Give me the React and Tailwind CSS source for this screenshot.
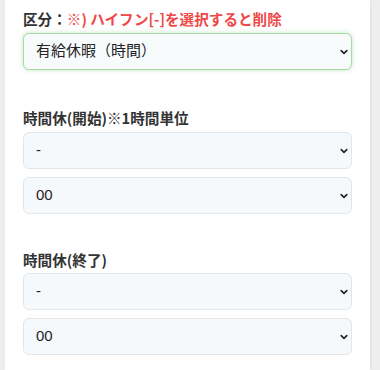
import React from 'react';

const FONT = { fontFamily: '"Noto Sans CJK JP", "Liberation Sans", sans-serif' };

function Chevron() {
  return (
    <svg
      className="pointer-events-none absolute right-[4px] top-1/2 -translate-y-1/2"
      width="8"
      height="6"
      viewBox="0 0 8 6"
      fill="none"
    >
      <path d="M1.2 1.6l2.8 2.8 2.8-2.8" stroke="#222" strokeWidth="1.6" strokeLinecap="round" strokeLinejoin="round" />
    </svg>
  );
}

function Select({ value, options, active }) {
  return (
    <div className="relative">
      <select
        defaultValue={value}
        className={
          active
            ? 'block w-full h-[37px] appearance-none rounded-md border border-[#a6dba4] bg-[#f7fbfb] pl-3 pr-8 text-[15px] text-[#1f2326] shadow-[0_0_5px_rgba(120,200,120,0.45)] outline-none'
            : 'block w-full h-[37px] appearance-none rounded-md border border-[#e3e6e9] bg-[#f6f9fb] pl-3 pr-8 text-[15px] text-[#1f2326] outline-none'
        }
        style={{ fontFamily: '"Liberation Sans", "Noto Sans CJK JP", sans-serif' }}
      >
        {options.map(o => (
          <option key={o} value={o}>{o}</option>
        ))}
      </select>
      <Chevron />
    </div>
  );
}

const HOURS = ['-', '9', '10', '11', '12', '13', '14', '15', '16', '17', '18'];
const MINUTES = ['00', '15', '30', '45'];

export default function App() {
  return (
    <div className="min-h-[370px] bg-[#eeeeee] pl-[5px] pr-[10px]" style={FONT}>
      <div className="min-h-[370px] bg-white px-[18px] pt-[8px] shadow-[1px_0_3px_rgba(0,0,0,0.06)]">
        {/* 区分 */}
        <div className="mb-[37px]">
          <div className="mb-[3px] text-[14.6px] font-bold leading-[22px] text-[#333]">
            区分：<span className="text-[#f04848]">※) ハイフン[-]を選択すると削除</span>
          </div>
          <Select value="有給休暇（時間）" options={['-', '有給休暇（全日）', '有給休暇（時間）']} active />
        </div>

        {/* 開始 */}
        <div className="mb-[35px]">
          <div className="mb-[3px] text-[14.6px] font-bold leading-[22px] text-[#333]">
            時間休(開始)※1時間単位
          </div>
          <div className="flex flex-col gap-[8px]">
            <Select value="-" options={HOURS} />
            <Select value="00" options={MINUTES} />
          </div>
        </div>

        {/* 終了 */}
        <div>
          <div className="mb-[2px] text-[14.6px] font-bold leading-[22px] text-[#333]">
            時間休(終了)
          </div>
          <div className="flex flex-col gap-[8px]">
            <Select value="-" options={HOURS} />
            <Select value="00" options={MINUTES} />
          </div>
        </div>
      </div>
    </div>
  );
}
